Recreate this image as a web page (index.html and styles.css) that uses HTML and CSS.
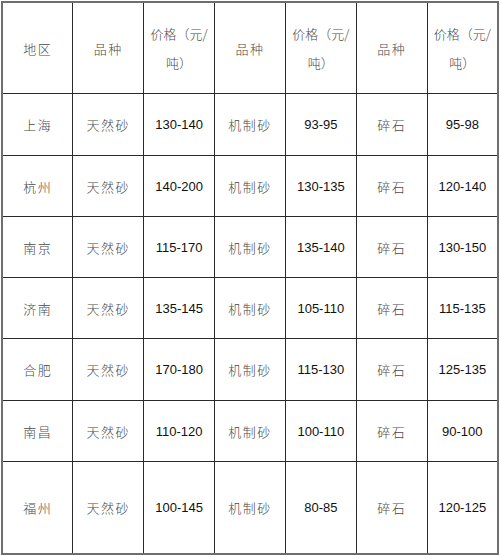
FILE: index.html
```html
<!DOCTYPE html>
<html lang="zh">
<head>
<meta charset="utf-8">
<link rel="stylesheet" href="styles.css">
</head>
<body>
<table class="price">
  <colgroup>
    <col><col><col><col><col><col><col>
  </colgroup>
  <tr class="head">
    <td class="zh">地区</td>
    <td class="zh">品种</td>
    <td class="zh two">价格（元/<br>吨）</td>
    <td class="zh">品种</td>
    <td class="zh two">价格（元/<br>吨）</td>
    <td class="zh">品种</td>
    <td class="zh two">价格（元/<br>吨）</td>
  </tr>
  <tr class="r62">
    <td class="zh">上海</td><td class="zh">天然砂</td><td class="num">130-140</td>
    <td class="zh">机制砂</td><td class="num">93-95</td><td class="zh">碎石</td><td class="num">95-98</td>
  </tr>
  <tr class="r61">
    <td class="zh">杭州</td><td class="zh">天然砂</td><td class="num">140-200</td>
    <td class="zh">机制砂</td><td class="num">130-135</td><td class="zh">碎石</td><td class="num">120-140</td>
  </tr>
  <tr class="r61">
    <td class="zh">南京</td><td class="zh">天然砂</td><td class="num">115-170</td>
    <td class="zh">机制砂</td><td class="num">135-140</td><td class="zh">碎石</td><td class="num">130-150</td>
  </tr>
  <tr class="r61">
    <td class="zh">济南</td><td class="zh">天然砂</td><td class="num">135-145</td>
    <td class="zh">机制砂</td><td class="num">105-110</td><td class="zh">碎石</td><td class="num">115-135</td>
  </tr>
  <tr class="r62">
    <td class="zh">合肥</td><td class="zh">天然砂</td><td class="num">170-180</td>
    <td class="zh">机制砂</td><td class="num">115-130</td><td class="zh">碎石</td><td class="num">125-135</td>
  </tr>
  <tr class="r61">
    <td class="zh">南昌</td><td class="zh">天然砂</td><td class="num">110-120</td>
    <td class="zh">机制砂</td><td class="num">100-110</td><td class="zh">碎石</td><td class="num">90-100</td>
  </tr>
  <tr class="last">
    <td class="zh">福州</td><td class="zh">天然砂</td><td class="num">100-145</td>
    <td class="zh">机制砂</td><td class="num">80-85</td><td class="zh">碎石</td><td class="num">120-125</td>
  </tr>
</table>
</body>
</html>
```
FILE: styles.css
```css
html, body {
  margin: 0;
  padding: 0;
  background: #ffffff;
}
body {
  padding: 1px 0 0 1px;
}
.price {
  border-collapse: collapse;
  table-layout: fixed;
  width: 498px;
  border: 2px solid #6e6e6e;
}
.price td {
  border: 1px solid #2a2a2a;
  text-align: center;
  vertical-align: middle;
  padding: 0;
  overflow: hidden;
}
.head td { height: 90px; }
.r62 td { height: 61px; }
.r61 td { height: 60px; }
.last td { height: 91px; }
.zh {
  font-family: "Noto Sans CJK SC", sans-serif;
  font-size: 13px;
  font-weight: 300;
  letter-spacing: 1.5px;
  color: #4a4a4a;
}
.two {
  line-height: 29px;
  letter-spacing: 0;
}
.num {
  font-family: "Liberation Sans", Arial, sans-serif;
  font-size: 13px;
  color: #111111;
}
```
